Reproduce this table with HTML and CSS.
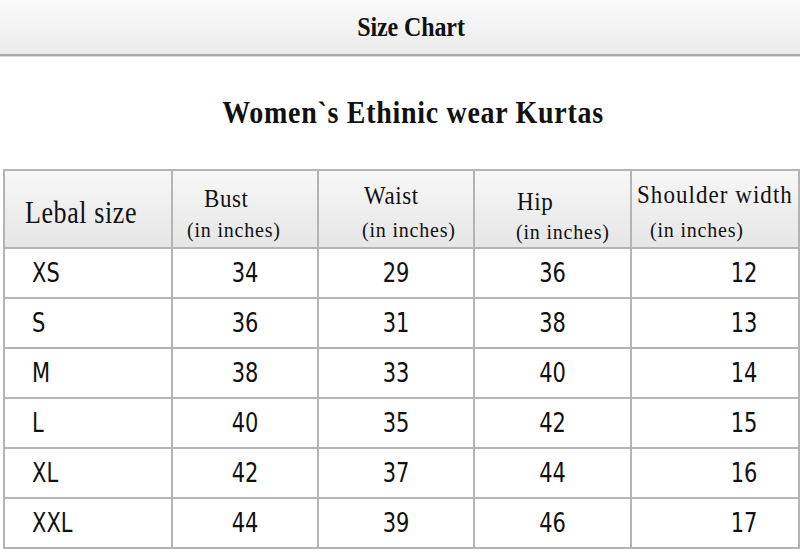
FILE: index.html
```html
<!DOCTYPE html>
<html lang="en">
<head>
<meta charset="utf-8">
<title>Size Chart</title>
<link rel="stylesheet" href="styles.css">
</head>
<body>
<header class="topbar">
  <h1 class="topbar-title">Size Chart</h1>
</header>
<h2 class="chart-title">Women`s Ethinic wear Kurtas</h2>
<table class="size-table">
  <colgroup>
    <col class="c-label"><col class="c-bust"><col class="c-waist"><col class="c-hip"><col class="c-shoulder">
  </colgroup>
  <thead>
    <tr>
      <th class="h-label"><span class="h-big">Lebal size</span></th>
      <th class="h-bust"><span class="h-main">Bust</span><span class="h-sub">(in inches)</span></th>
      <th class="h-waist"><span class="h-main">Waist</span><span class="h-sub">(in inches)</span></th>
      <th class="h-hip"><span class="h-main">Hip</span><span class="h-sub">(in inches)</span></th>
      <th class="h-shoulder"><span class="h-main">Shoulder width</span><span class="h-sub">(in inches)</span></th>
    </tr>
  </thead>
  <tbody>
    <tr><td class="lbl"><span class="t">XS</span></td><td><span class="t">34</span></td><td><span class="t">29</span></td><td><span class="t">36</span></td><td class="sh"><span class="t">12</span></td></tr>
    <tr><td class="lbl"><span class="t">S</span></td><td><span class="t">36</span></td><td><span class="t">31</span></td><td><span class="t">38</span></td><td class="sh"><span class="t">13</span></td></tr>
    <tr><td class="lbl"><span class="t">M</span></td><td><span class="t">38</span></td><td><span class="t">33</span></td><td><span class="t">40</span></td><td class="sh"><span class="t">14</span></td></tr>
    <tr><td class="lbl"><span class="t">L</span></td><td><span class="t">40</span></td><td><span class="t">35</span></td><td><span class="t">42</span></td><td class="sh"><span class="t">15</span></td></tr>
    <tr><td class="lbl"><span class="t">XL</span></td><td><span class="t">42</span></td><td><span class="t">37</span></td><td><span class="t">44</span></td><td class="sh"><span class="t">16</span></td></tr>
    <tr><td class="lbl"><span class="t">XXL</span></td><td><span class="t">44</span></td><td><span class="t">39</span></td><td><span class="t">46</span></td><td class="sh"><span class="t">17</span></td></tr>
  </tbody>
</table>
</body>
</html>
```
FILE: styles.css
```css
html, body {
  margin: 0;
  padding: 0;
  background: #ffffff;
  color: #111111;
  font-family: "Liberation Serif", "Times New Roman", serif;
}

.topbar {
  height: 54px;
  background: linear-gradient(#fbfbfb, #ebebeb);
  border-bottom: 2px solid #a9a9a9;
  box-shadow: 0 1px 0 #dcdcdc;
  display: flex;
  align-items: center;
  justify-content: center;
}

.topbar-title {
  margin: 0;
  padding-left: 22px;
  font-size: 24px;
  font-weight: bold;
  letter-spacing: -0.1px;
  transform: scaleY(1.18);
}

.chart-title {
  margin: 34px 0 0 0;
  padding-left: 26px;
  height: 44px;
  line-height: 46px;
  text-align: center;
  font-size: 28px;
  font-weight: bold;
  letter-spacing: 0.7px;
  transform: scaleY(1.1);
}

.size-table {
  margin: 35px 0 0 3px;
  width: 795px;
  border-collapse: collapse;
  table-layout: fixed;
  border: 2px solid #acacac;
}

.c-label { width: 168px; }
.c-bust { width: 146px; }
.c-waist { width: 156px; }
.c-hip { width: 157px; }
.c-shoulder { width: 168px; }

.size-table th,
.size-table td {
  border: 2px solid #b4b4b4;
  padding: 0;
}

.size-table thead tr { height: 78px; }
.size-table tbody tr { height: 50px; }

.size-table th {
  background: linear-gradient(#f7f7f7, #e6e6e6);
  font-weight: normal;
  text-align: left;
  vertical-align: top;
}

.h-big {
  display: block;
  padding: 20px 0 0 20px;
  font-size: 26px;
  letter-spacing: 0.6px;
  transform: scaleY(1.2);
  transform-origin: left top;
}

.h-main {
  display: block;
  font-size: 23px;
  letter-spacing: 0.6px;
  line-height: 28px;
  transform: scaleY(1.1);
}

.h-sub {
  display: block;
  font-size: 20px;
  letter-spacing: 0.8px;
  line-height: 24px;
  margin-top: 5px;
}

.h-bust { padding: 14px 0 0 0 !important; }
.h-bust .h-main { padding-left: 31px; }
.h-bust .h-sub { padding-left: 14px; }

.h-waist { padding: 11px 0 0 0 !important; }
.h-waist .h-main { padding-left: 45px; }
.h-waist .h-sub { padding-left: 43px; margin-top: 8px; }

.h-hip { padding: 17px 0 0 0 !important; }
.h-hip .h-main { padding-left: 42px; }
.h-hip .h-sub { padding-left: 41px; margin-top: 4px; }

.h-shoulder { padding: 10px 0 0 0 !important; }
.h-shoulder .h-main { padding-left: 5px; letter-spacing: 1.05px; }
.h-shoulder .h-sub { padding-left: 18px; margin-top: 9px; }

.size-table td {
  text-align: center;
  vertical-align: middle;
  font-family: "DejaVu Sans", Verdana, sans-serif;
  font-size: 21px;
}

.size-table td.lbl {
  text-align: left;
  padding-left: 27px;
}

.size-table td.sh {
  padding-left: 58px;
}

.t {
  display: inline-block;
  transform: scaleY(1.3);
}
```
